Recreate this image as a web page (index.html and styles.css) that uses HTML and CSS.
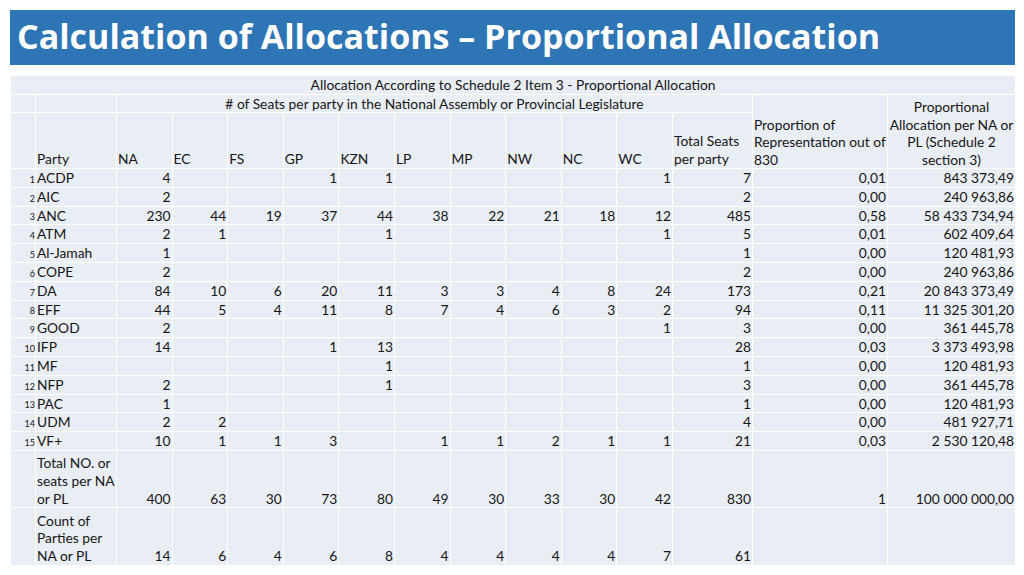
FILE: index.html
```html
<!DOCTYPE html>
<html>
<head>
<meta charset="utf-8">
<link rel="stylesheet" href="styles.css">
</head>
<body>
<div class="page">
  <h1 class="title">Calculation of Allocations – Proportional Allocation</h1>
  <table class="alloc">
    <colgroup>
      <col class="c-idx"><col class="c-party">
      <col class="c-prov"><col class="c-prov"><col class="c-prov"><col class="c-prov"><col class="c-prov">
      <col class="c-prov"><col class="c-prov"><col class="c-prov"><col class="c-prov"><col class="c-prov">
      <col class="c-total"><col class="c-propn"><col class="c-amount">
    </colgroup>
    <tr class="r1"><td colspan="15" class="center">Allocation According to Schedule 2 Item 3 - Proportional Allocation</td></tr>
    <tr class="r1">
      <td></td><td></td>
      <td colspan="11" class="center">#&nbsp;of Seats per party in the National Assembly or Provincial Legislature</td>
      <td rowspan="2" class="left">Proportion of Representation out of 830</td>
      <td rowspan="2" class="center">Proportional Allocation per NA or PL (Schedule 2 section 3)</td>
    </tr>
    <tr class="hdr">
      <td></td><td class="left">Party</td>
      <td class="left">NA</td><td class="left">EC</td><td class="left">FS</td><td class="left">GP</td><td class="left">KZN</td>
      <td class="left">LP</td><td class="left">MP</td><td class="left">NW</td><td class="left">NC</td><td class="left">WC</td>
      <td class="left">Total Seats per party</td>
    </tr>
    <tr><td class="idx">1</td><td class="left">ACDP</td><td>4</td><td></td><td></td><td>1</td><td>1</td><td></td><td></td><td></td><td></td><td>1</td><td>7</td><td>0,01</td><td>843 373,49</td></tr>
    <tr><td class="idx">2</td><td class="left">AIC</td><td>2</td><td></td><td></td><td></td><td></td><td></td><td></td><td></td><td></td><td></td><td>2</td><td>0,00</td><td>240 963,86</td></tr>
    <tr><td class="idx">3</td><td class="left">ANC</td><td>230</td><td>44</td><td>19</td><td>37</td><td>44</td><td>38</td><td>22</td><td>21</td><td>18</td><td>12</td><td>485</td><td>0,58</td><td>58 433 734,94</td></tr>
    <tr><td class="idx">4</td><td class="left">ATM</td><td>2</td><td>1</td><td></td><td></td><td>1</td><td></td><td></td><td></td><td></td><td>1</td><td>5</td><td>0,01</td><td>602 409,64</td></tr>
    <tr><td class="idx">5</td><td class="left">Al-Jamah</td><td>1</td><td></td><td></td><td></td><td></td><td></td><td></td><td></td><td></td><td></td><td>1</td><td>0,00</td><td>120 481,93</td></tr>
    <tr><td class="idx">6</td><td class="left">COPE</td><td>2</td><td></td><td></td><td></td><td></td><td></td><td></td><td></td><td></td><td></td><td>2</td><td>0,00</td><td>240 963,86</td></tr>
    <tr><td class="idx">7</td><td class="left">DA</td><td>84</td><td>10</td><td>6</td><td>20</td><td>11</td><td>3</td><td>3</td><td>4</td><td>8</td><td>24</td><td>173</td><td>0,21</td><td>20 843 373,49</td></tr>
    <tr><td class="idx">8</td><td class="left">EFF</td><td>44</td><td>5</td><td>4</td><td>11</td><td>8</td><td>7</td><td>4</td><td>6</td><td>3</td><td>2</td><td>94</td><td>0,11</td><td>11 325 301,20</td></tr>
    <tr><td class="idx">9</td><td class="left">GOOD</td><td>2</td><td></td><td></td><td></td><td></td><td></td><td></td><td></td><td></td><td>1</td><td>3</td><td>0,00</td><td>361 445,78</td></tr>
    <tr><td class="idx">10</td><td class="left">IFP</td><td>14</td><td></td><td></td><td>1</td><td>13</td><td></td><td></td><td></td><td></td><td></td><td>28</td><td>0,03</td><td>3 373 493,98</td></tr>
    <tr><td class="idx">11</td><td class="left">MF</td><td></td><td></td><td></td><td></td><td>1</td><td></td><td></td><td></td><td></td><td></td><td>1</td><td>0,00</td><td>120 481,93</td></tr>
    <tr><td class="idx">12</td><td class="left">NFP</td><td>2</td><td></td><td></td><td></td><td>1</td><td></td><td></td><td></td><td></td><td></td><td>3</td><td>0,00</td><td>361 445,78</td></tr>
    <tr><td class="idx">13</td><td class="left">PAC</td><td>1</td><td></td><td></td><td></td><td></td><td></td><td></td><td></td><td></td><td></td><td>1</td><td>0,00</td><td>120 481,93</td></tr>
    <tr><td class="idx">14</td><td class="left">UDM</td><td>2</td><td>2</td><td></td><td></td><td></td><td></td><td></td><td></td><td></td><td></td><td>4</td><td>0,00</td><td>481 927,71</td></tr>
    <tr><td class="idx">15</td><td class="left">VF+</td><td>10</td><td>1</td><td>1</td><td>3</td><td></td><td>1</td><td>1</td><td>2</td><td>1</td><td>1</td><td>21</td><td>0,03</td><td>2 530 120,48</td></tr>
    <tr class="tot"><td></td><td class="left">Total NO. or seats per NA or PL</td><td>400</td><td>63</td><td>30</td><td>73</td><td>80</td><td>49</td><td>30</td><td>33</td><td>30</td><td>42</td><td>830</td><td>1</td><td>100 000 000,00</td></tr>
    <tr class="tot"><td></td><td class="left">Count of Parties per NA or PL</td><td>14</td><td>6</td><td>4</td><td>6</td><td>8</td><td>4</td><td>4</td><td>4</td><td>4</td><td>7</td><td>61</td><td></td><td></td></tr>
  </table>
</div>
</body>
</html>
```
FILE: styles.css
```css
html, body {
  margin: 0;
  padding: 0;
  background: #ffffff;
}

.page {
  padding: 10px 9px 0 10px;
  display: flex;
  flex-direction: column;
}

.title {
  margin: 0;
  height: 55px;
  background: #2e75b6;
  color: #ffffff;
  font-family: "Open Sans", "Noto Sans", sans-serif;
  font-weight: 700;
  font-size: 34px;
  line-height: 53px;
  padding-left: 7px;
  white-space: nowrap;
}

.alloc {
  margin-top: 10px;
  width: 1005px;
  border-collapse: collapse;
  table-layout: fixed;
  font-family: Lato, "Liberation Sans", sans-serif;
  font-size: 13.8px;
  color: #161616;
}

.c-idx { width: 25px; }
.c-party { width: 81px; }
.c-prov { width: 55.6px; }
.c-total { width: 80px; }
.c-propn { width: 135px; }
.c-amount { width: 128px; }

.alloc td {
  background: #e9edf4;
  border: 1px solid #ffffff;
  padding: 0 1px 0 1px;
  line-height: 17.8px;
  height: 17.8px;
  vertical-align: bottom;
  text-align: right;
  white-space: nowrap;
}

.alloc td.left {
  text-align: left;
  white-space: normal;
}

.alloc td.center {
  text-align: center;
  white-space: normal;
}

.alloc tr.r1 td {
  line-height: 17.5px;
  height: 17.5px;
}

.alloc tr.hdr td {
  height: 55px;
}

.alloc tr.tot td {
  height: 56.5px;
}

.alloc td.idx {
  font-size: 9px;
  padding-right: 0;
  line-height: 15px;
}
```
